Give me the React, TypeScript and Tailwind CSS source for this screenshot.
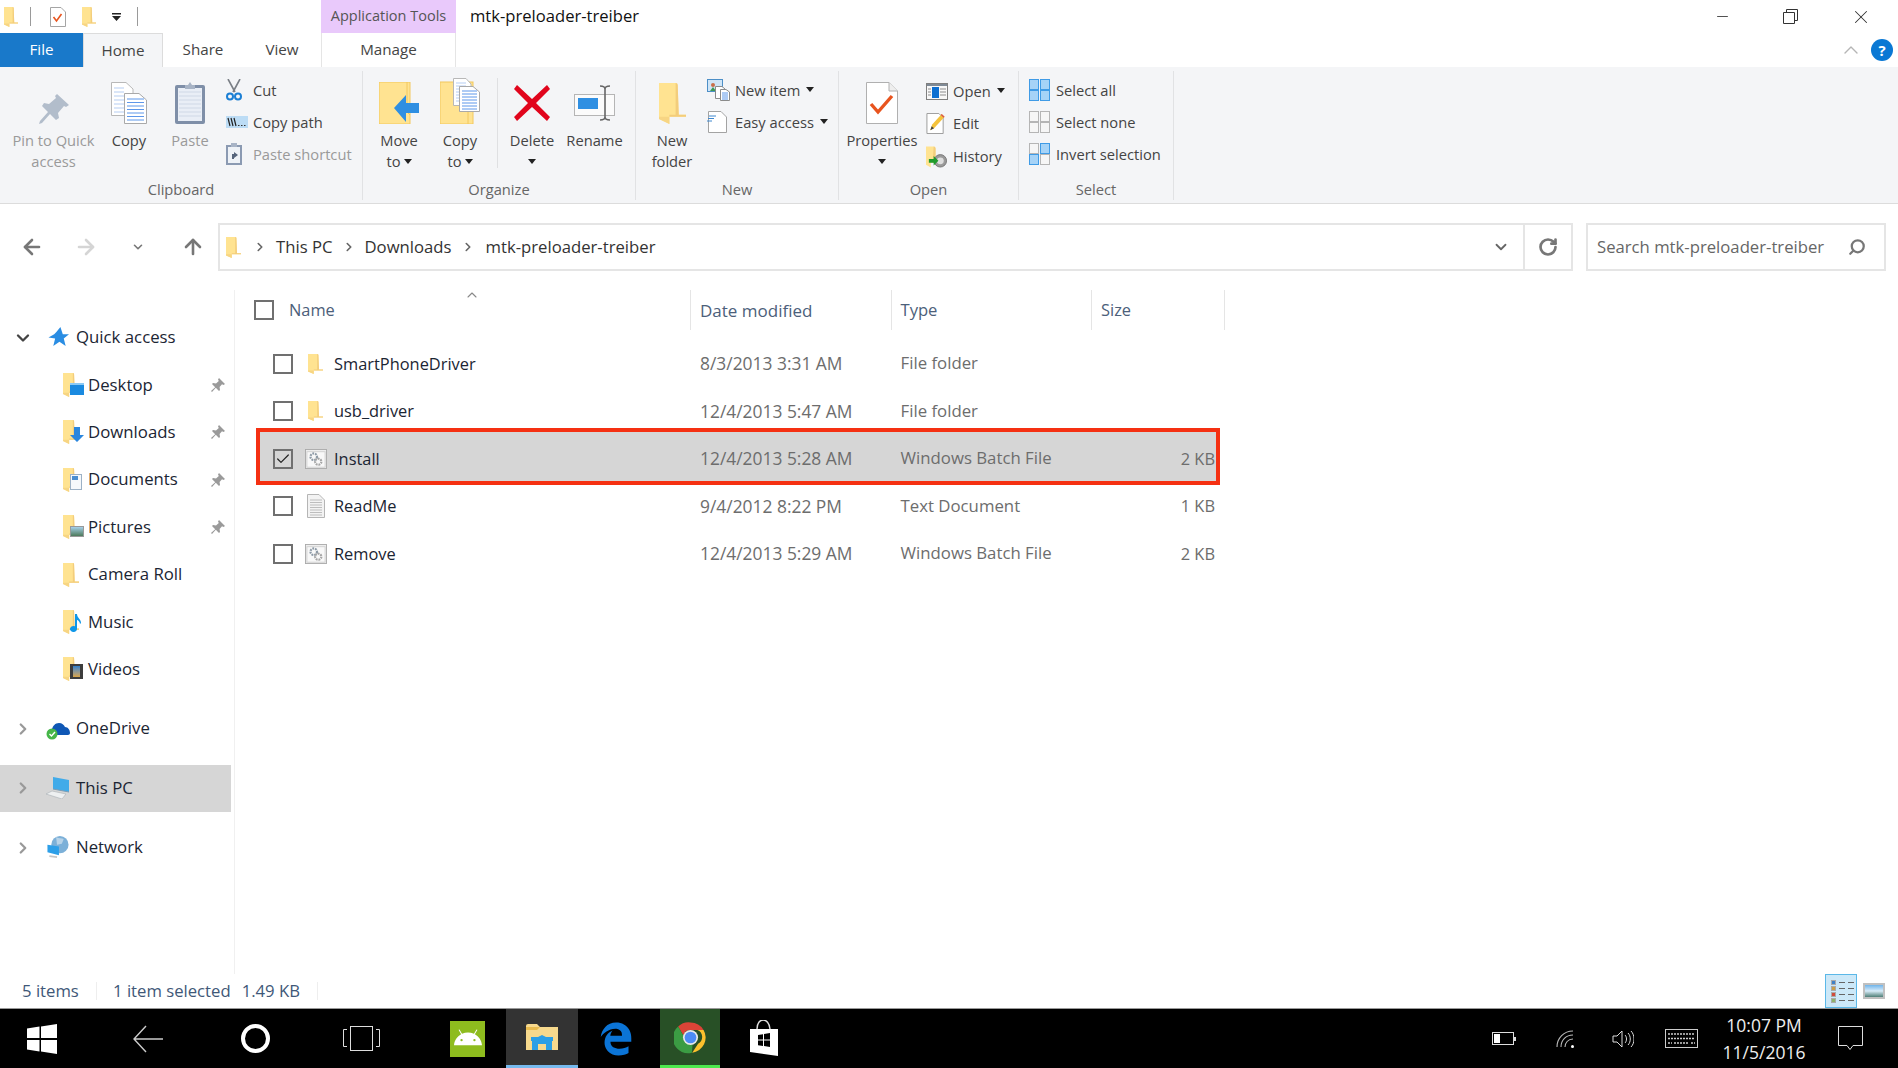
import React from 'react';
import { ArrowLeft, ArrowRight, ArrowUp, ChevronDown, ChevronRight, ChevronUp, RotateCw, Search, Check, Minus, X } from 'lucide-react';
import { FaAndroid } from 'react-icons/fa';
import { FaEdgeLegacy } from 'react-icons/fa6';

// small yellow explorer folder, stretched by width/height classes
const Folder = ({ className = 'w-[16px] h-[20px]' }: { className?: string }) => (
  <svg viewBox="0 0 26 40" className={className} preserveAspectRatio="none">
    <path d="M0 0H16Q18 0 18 2L19 31H26V33H10V40L0 35Z" fill="#ffe391" />
    <path d="M16 0Q18 0 18 2L19 31H26V33H10V31L16 31Z" fill="#f3cd7c" />
    <path d="M0 33L10 33V40L0 35Z" fill="#f7d583" />
  </svg>
);

const Pin = () => (
  <svg viewBox="0 0 16 16" className="w-[16px] h-[16px]">
    <path d="M9 1l6 6-1.5 1L12 7.2 9.6 10l.4 3-1 1-3.2-3.2L2 15l-1-1 4.2-3.8L2 7l1-1 3 .4L8.8 4 8 2.5z" fill="#9a9a9a" />
  </svg>
);

const DropArrow = () => (
  <svg viewBox="0 0 8 5" className="w-[8px] h-[5px] inline-block">
    <path d="M0 0h8L4 5z" fill="#222" />
  </svg>
);

const BatchIcon = () => (
  <svg viewBox="0 0 24 22" className="w-[22px] h-[20px] -ml-[3px]">
    <rect x="0.5" y="0.5" width="23" height="21" fill="#eeeeee" stroke="#a9a9a9" />
    <rect x="2" y="3" width="20" height="17" fill="#f8f8f8" stroke="#cfcfcf" />
    <circle cx="9.5" cy="8.5" r="3.6" fill="none" stroke="#8d9aa6" strokeWidth="2.4" strokeDasharray="2 1" />
    <circle cx="14.5" cy="14" r="3.4" fill="none" stroke="#a5a5a5" strokeWidth="2.4" strokeDasharray="2 1" />
  </svg>
);

const TextFileIcon = () => (
  <svg viewBox="0 0 18 24" className="w-[18px] h-[24px] -ml-[1px]">
    <path d="M.5.5H12L17.5 6V23.5H.5z" fill="#f3f3f3" stroke="#b5b5b5" />
    {[6, 8.5, 11, 13.5, 16, 18.5, 21].map((y) => (
      <path key={y} d={`M3 ${y}H15`} stroke="#bdbdbd" strokeWidth="1" />
    ))}
  </svg>
);

const CopyDocs = ({ className = 'w-[36px] h-[42px]' }: { className?: string }) => (
  <svg viewBox="0 0 36 42" className={className}>
    <path d="M.5.5H15L22 7V33.5H.5z" fill="#fff" stroke="#b8b8b8" />
    {[6, 10, 14, 18, 22, 26, 30].map((y) => (
      <path key={y} d={`M3 ${y}H13`} stroke="#b5cdf2" />
    ))}
    <path d="M13.5 11.5H28L35.5 18V41.5H13.5z" fill="#fff" stroke="#a9a9a9" />
    {[17, 20.5, 24, 27.5, 31, 34.5, 38].map((y) => (
      <path key={y} d={`M16 ${y}H33`} stroke="#5d97ea" />
    ))}
  </svg>
);

// -- icons that sit in the ribbon --
const PinBig = () => (
  <svg viewBox="0 0 30 30" className="w-[30px] h-[30px]">
    <path d="M18 0l12 11-3 2-2-1-6 7 1 5-3 2-6-6-8 9-3 1 1-3 8-9-6-6 2-3 5 1 7-6-1-2z" fill="#b2bdcb" />
  </svg>
);

const Clipboard = ({ className = 'w-[30px] h-[42px]' }: { className?: string }) => (
  <svg viewBox="0 0 30 42" className={className}>
    <rect x="0" y="3" width="30" height="39" rx="2" fill="#7f8fa8" />
    <rect x="3" y="6" width="24" height="33" fill="#e9eef6" />
    {[10, 14, 18, 22, 26, 30, 34].map((y) => (
      <path key={y} d={`M4 ${y}H26`} stroke="#cfd8e6" />
    ))}
    <path d="M10 7V3h3l2-3 2 3h3v4z" fill="#a8b4c6" />
  </svg>
);

const Scissors = () => (
  <svg viewBox="0 0 16 22" className="w-[16px] h-[22px]">
    <path d="M2 0l7 13M14 0L7 13" stroke="#7a7f86" strokeWidth="1.6" fill="none" />
    <circle cx="4" cy="17.5" r="3" fill="none" stroke="#1b7fd4" strokeWidth="2" />
    <circle cx="12" cy="17.5" r="3" fill="none" stroke="#1b7fd4" strokeWidth="2" />
  </svg>
);

const CopyPathIcon = () => (
  <svg viewBox="0 0 22 12" className="w-[22px] h-[12px]">
    <rect width="22" height="12" fill="#bcdcf5" />
    <path d="M2 2l2 8M5 2l2 8M8 2l2 8" stroke="#222" strokeWidth="1.2" />
    <path d="M12 9.5h1.5M15 9.5h1.5M18 9.5h1.5" stroke="#333" />
  </svg>
);

const PasteShortcutIcon = () => (
  <svg viewBox="0 0 16 22" className="w-[16px] h-[22px]">
    <rect y="2" width="16" height="20" fill="#8b9ab2" />
    <rect x="2" y="4" width="12" height="16" fill="#eef2f7" />
    <path d="M5 0h6v4H5z" fill="#a8b4c6" />
    <path d="M6 16V11h2V9l4 3-4 3v-2H8v3z" fill="#56657c" />
  </svg>
);

const MoveToIcon = () => (
  <svg viewBox="0 0 40 42" className="w-[40px] h-[42px]">
    <rect x="0" y="0" width="31" height="42" fill="#ffe391" stroke="#f2c85e" />
    <path d="M28 0V30L31 33" fill="none" stroke="#f2c85e" />
    <path d="M15 26L27 13V21H40V31H27V40Z" fill="#2f8fe2" />
  </svg>
);

const CopyToIcon = () => (
  <svg viewBox="0 0 40 46" className="w-[40px] h-[46px]">
    <rect x="0" y="4" width="33" height="42" fill="#ffe391" stroke="#f2c85e" />
    <path d="M28 4V46" stroke="#f2c85e" />
    <path d="M13.5.5H26L31 6V27.5H13.5z" fill="#fff" stroke="#b8b8b8" />
    {[5, 8, 11, 14, 17, 20, 23].map((y) => (
      <path key={y} d={`M16 ${y}H26`} stroke="#b5cdf2" />
    ))}
    <path d="M19.5 8.5H33L39.5 14V33.5H19.5z" fill="#fff" stroke="#a9a9a9" />
    {[13, 16, 19, 22, 25, 28, 31].map((y) => (
      <path key={y} d={`M22 ${y}H37`} stroke="#5d97ea" />
    ))}
  </svg>
);

const DeleteIcon = () => (
  <svg viewBox="0 0 36 36" className="w-[36px] h-[36px] mb-[3px]">
    <path d="M3 0L18 14 33 0l3 4-14 14 14 14-3 4L18 22 3 36l-3-4 14-14L0 4z" fill="#e1051c" />
  </svg>
);

const RenameIcon = () => (
  <svg viewBox="0 0 41 36" className="w-[41px] h-[36px] mb-[3px]">
    <rect x="0.5" y="9.5" width="40" height="21" fill="#fbfbfb" stroke="#b5b5b5" />
    <rect x="4" y="13" width="20" height="11" fill="#2f8fe2" />
    <path d="M26 1c3 0 5 1 5 3v28c0 2-2 3-5 3M36 1c-3 0-5 1-5 3v28c0 2 2 3 5 3" fill="none" stroke="#666" strokeWidth="1.6" />
  </svg>
);

const NewItemIcon = () => (
  <svg viewBox="0 0 23 22" className="w-[23px] h-[22px]">
    <rect x="0.5" y="0.5" width="15" height="12" fill="#cfe5f7" stroke="#4d8fc7" />
    <circle cx="6" cy="6" r="2" fill="#c96f4a" />
    <path d="M3 12l3-4 3 4z" fill="#3d9a57" />
    <path d="M8.5 7.5H15L18 10V19.5H8.5z" fill="#fff" stroke="#8b8b8b" />
    <path d="M13.5 10.5H19L22.5 13V21.5H13.5z" fill="#fff" stroke="#8b8b8b" />
    {[14, 16, 18, 20].map((y) => (
      <path key={y} d={`M15 ${y}H21`} stroke="#5d97ea" />
    ))}
  </svg>
);

const EasyAccessIcon = () => (
  <svg viewBox="0 0 20 22" className="w-[20px] h-[22px]">
    <path d="M1.5.5H14L19.5 6V21.5H1.5z" fill="#fff" stroke="#a3a3a3" />
    <path d="M2 5h7M1 7.5h6M0 10h5" stroke="#3f88cf" />
  </svg>
);

const PropertiesIcon = () => (
  <svg viewBox="0 0 32 42" className="w-[32px] h-[42px]">
    <path d="M.5.5H23L31.5 9V41.5H.5z" fill="#fff" stroke="#b0b0b0" />
    <path d="M23 .5V9h8.5" fill="#eee" stroke="#b0b0b0" />
    <path d="M5 22l7 8L26 14" fill="none" stroke="#e8541e" strokeWidth="3.4" />
  </svg>
);

const OpenIcon = () => (
  <svg viewBox="0 0 22 17" className="w-[22px] h-[17px]">
    <rect x="0.5" y="0.5" width="21" height="16" fill="#f8f8f8" stroke="#7f7f7f" />
    <rect x="1" y="1" width="20" height="2" fill="#7f8a96" />
    <rect x="6" y="4" width="7" height="11" fill="#0d6fd1" />
    <path d="M2 6h3M2 9h3M2 12h3M14 6h6M14 9h6M14 12h6" stroke="#8c8c8c" />
  </svg>
);

const EditIcon = () => (
  <svg viewBox="0 0 20 22" className="w-[20px] h-[21px]">
    <path d="M.5.5H13L17.5 5V21.5H.5z" fill="#fff" stroke="#9a9a9a" />
    <path d="M4 18l2-6L16 1l3 3L8 16z" fill="#f4c23b" />
    <path d="M4 18l1.4-4 2.6 2z" fill="#444" />
    <path d="M16 1l3 3-1 1-3-3z" fill="#d9534f" />
  </svg>
);

const HistoryIcon = () => (
  <svg viewBox="0 0 22 22" className="w-[21px] h-[22px]">
    <path d="M0 0H8Q10 0 10 2V15H15V17H5V22L0 19Z" fill="#ffe391" />
    <path d="M8 0Q10 0 10 2V15H15V17H7Z" fill="#f3cd7c" />
    <circle cx="15" cy="15" r="6.5" fill="#9a9a9a" stroke="#777" />
    <circle cx="15" cy="15" r="3.6" fill="#dedede" />
    <path d="M2 14h5v-3l5 5-5 5v-3H2z" transform="translate(1 -1)" fill="#1f9b2c" />
  </svg>
);

const FourSquares = ({ on }: { on: boolean[] }) => (
  <svg viewBox="0 0 21 22" className="w-[21px] h-[22px]">
    {[
      [0.5, 0.5],
      [11.5, 0.5],
      [0.5, 11.5],
      [11.5, 11.5],
    ].map(([x, y], i) => (
      <rect key={i} x={x} y={y} width="9" height="10" fill={on[i] ? '#a6d3f7' : '#f6f6f6'} stroke={on[i] ? '#3f9be6' : '#b5b5b5'} />
    ))}
  </svg>
);

// -- big and small ribbon buttons --
const LargeBtn = ({ width, icon, lines, arrow, gray }: { width: string; icon: React.ReactNode; lines: string[]; arrow?: 'inline' | 'below'; gray?: boolean }) => (
  <div className={`${width} flex flex-col items-center`}>
    <div className="h-[46px] mt-[7px] flex items-end justify-center">{icon}</div>
    <div className={`mt-[6px] text-center leading-[21px] ${gray ? 'text-[#9a9a9a]' : 'text-[#444]'}`}>
      <div>{lines[0]}</div>
      {lines[1] && (
        <div>
          {lines[1]}
          {arrow === 'inline' && <span className="ml-[3px] relative -top-[2px]"><DropArrow /></span>}
        </div>
      )}
      {arrow === 'below' && <div className="h-[21px] flex items-center justify-center"><DropArrow /></div>}
    </div>
  </div>
);

const SmallBtn = ({ icon, label, gray, arrow, iconW = 'w-[27px]', h = 'h-[32px]' }: { icon: React.ReactNode; label: string; gray?: boolean; arrow?: boolean; iconW?: string; h?: string }) => (
  <div className={`flex items-center ${h}`}>
    <div className={`${iconW} shrink-0`}>{icon}</div>
    <span className={gray ? 'text-[#9a9a9a]' : 'text-[#444]'}>{label}</span>
    {arrow && <span className="ml-[6px] relative -top-[2px]"><DropArrow /></span>}
  </div>
);

const Group = ({ width, label, children }: { width: string; label: string; children: React.ReactNode }) => (
  <div className={`${width} shrink-0 h-[129px] mt-[4px] border-r border-[#e1e2e4] flex flex-col justify-between`}>
    <div className="flex">{children}</div>
    <div className="h-[21px] leading-[21px] text-center text-[#666]">{label}</div>
  </div>
);

const Ribbon = () => (
  <div className="h-[137px] shrink-0 bg-[#f4f5f7] border-b border-[#dcdcdc] flex text-[14.7px]">
    <Group width="w-[363px]" label="Clipboard">
      <div className="pl-[8px]" />
      <LargeBtn width="w-[91px]" icon={<PinBig />} lines={['Pin to Quick', 'access']} gray />
      <LargeBtn width="w-[60px]" icon={<CopyDocs />} lines={['Copy']} />
      <LargeBtn width="w-[62px]" icon={<Clipboard />} lines={['Paste']} gray />
      <div className="ml-[5px] pt-[3px]">
        <SmallBtn icon={<Scissors />} label="Cut" />
        <SmallBtn icon={<CopyPathIcon />} label="Copy path" />
        <SmallBtn icon={<PasteShortcutIcon />} label="Paste shortcut" gray />
      </div>
    </Group>
    <Group width="w-[273px]" label="Organize">
      <div className="pl-[5px]" />
      <LargeBtn width="w-[62px]" icon={<MoveToIcon />} lines={['Move', 'to']} arrow="inline" />
      <LargeBtn width="w-[60px]" icon={<CopyToIcon />} lines={['Copy', 'to']} arrow="inline" />
      <div className="ml-[7px] w-px h-[90px] mt-[7px] bg-[#dfe0e2]" />
      <LargeBtn width="w-[68px]" icon={<DeleteIcon />} lines={['Delete']} arrow="below" />
      <LargeBtn width="w-[57px]" icon={<RenameIcon />} lines={['Rename']} />
    </Group>
    <Group width="w-[203px]" label="New">
      <div className="pl-[11px]" />
      <LargeBtn width="w-[50px]" icon={<Folder className="w-[27px] h-[41px]" />} lines={['New', 'folder']} />
      <div className="ml-[10px] pt-[3px]">
        <SmallBtn icon={<NewItemIcon />} label="New item" arrow iconW="w-[28px]" />
        <SmallBtn icon={<EasyAccessIcon />} label="Easy access" arrow iconW="w-[28px]" />
      </div>
    </Group>
    <Group width="w-[180px]" label="Open">
      <div className="pl-[7px]" />
      <LargeBtn width="w-[72px]" icon={<PropertiesIcon />} lines={['Properties']} arrow="below" />
      <div className="ml-[8px] pt-[4px]">
        <SmallBtn icon={<OpenIcon />} label="Open" arrow />
        <SmallBtn icon={<EditIcon />} label="Edit" h="h-[33px]" />
        <SmallBtn icon={<HistoryIcon />} label="History" h="h-[33px]" />
      </div>
    </Group>
    <Group width="w-[155px]" label="Select">
      <div className="pl-[10px] pt-[3px]">
        <SmallBtn icon={<FourSquares on={[true, true, true, true]} />} label="Select all" />
        <SmallBtn icon={<FourSquares on={[false, false, false, false]} />} label="Select none" />
        <SmallBtn icon={<FourSquares on={[false, true, true, false]} />} label="Invert selection" />
      </div>
    </Group>
  </div>
);

const TitleBar = () => (
  <div className="h-[33px] shrink-0 flex">
    <div className="w-[321px] flex items-center pl-[4px]">
      <Folder className="w-[14px] h-[20px]" />
      <div className="ml-[12px] w-px h-[19px] bg-[#9a9a9a]" />
      <svg viewBox="0 0 16 20" className="ml-[19px] w-[16px] h-[20px]">
        <path d="M.5.5H11L15.5 5V19.5H.5z" fill="#fff" stroke="#a5a5a5" />
        <path d="M3.5 10l3 4 5-7" fill="none" stroke="#e8541e" strokeWidth="1.6" />
      </svg>
      <Folder className="ml-[16px] w-[14px] h-[20px]" />
      <svg viewBox="0 0 9 8" className="ml-[16px] w-[9px] h-[8px]">
        <path d="M0 0h9v1.4H0zM0 3h9L4.5 8z" fill="#222" />
      </svg>
      <div className="ml-[16px] w-px h-[19px] bg-[#9a9a9a]" />
    </div>
    <div className="w-[135px] bg-[#e9c9fb] flex items-center justify-center text-[#555] text-[14.5px]">Application Tools</div>
    <div className="ml-[14px] flex items-center text-[16.6px] text-[#111]">mtk-preloader-treiber</div>
    <div className="ml-auto flex items-center pr-[26px] text-[#333]">
      <Minus size={17} strokeWidth={1.2} />
      <svg viewBox="0 0 15 15" className="ml-[52px] w-[15px] h-[15px]">
        <path d="M.5 3.5h11v11H.5zM3.5 3V.5h11v11H12" fill="none" stroke="#333" />
      </svg>
      <X size={22} strokeWidth={1.1} className="ml-[52px]" />
    </div>
  </div>
);

const Tabs = () => (
  <div className="h-[34px] shrink-0 flex items-stretch bg-white text-[#444] text-[15.2px] relative">
    <div className="w-[83px] bg-[#1979ca] text-white flex items-center justify-center">File</div>
    <div className="w-[80px] bg-[#f4f5f7] border-x border-t border-[#dcdcdc] flex items-center justify-center">Home</div>
    <div className="w-[80px] flex items-center justify-center">Share</div>
    <div className="w-[78px] flex items-center justify-center">View</div>
    <div className="w-[135px] border-x border-[#e5e5e5] flex items-center justify-center">Manage</div>
    <div className="ml-auto flex items-center pr-[5px]">
      <ChevronUp size={24} strokeWidth={1.4} className="text-[#b5b5b5]" />
      <div className="ml-[8px] w-[22px] h-[22px] rounded-full bg-[#0a78d4] text-white flex items-center justify-center text-[15px] font-bold leading-none">?</div>
    </div>
  </div>
);

const NavBar = () => (
  <div className="h-[86px] shrink-0 pt-[19px] flex items-start text-[16.7px]">
    <div className="w-[218px] h-[48px] flex items-center text-[#777]">
      <ArrowLeft size={24} strokeWidth={2.6} className="ml-[20px]" />
      <ArrowRight size={24} strokeWidth={2.6} className="ml-[30px] text-[#d5d5d5]" />
      <ChevronDown size={14} strokeWidth={2.8} className="ml-[33px]" />
      <ArrowUp size={24} strokeWidth={2.6} className="ml-[36px]" />
    </div>
    <div className="w-[1355px] h-[48px] border-2 border-[#e5e5e5] flex items-center text-[#333]">
      <Folder className="ml-[6px] w-[15px] h-[21px]" />
      <ChevronRight size={14} strokeWidth={2.8} className="ml-[12px] text-[#666]" />
      <span className="ml-[9px]">This PC</span>
      <ChevronRight size={14} strokeWidth={2.8} className="ml-[10px] text-[#666]" />
      <span className="ml-[8px]">Downloads</span>
      <ChevronRight size={14} strokeWidth={2.8} className="ml-[10px] text-[#666]" />
      <span className="ml-[10px]">mtk-preloader-treiber</span>
      <ChevronDown size={18} strokeWidth={2.4} className="ml-auto mr-[13px] text-[#666]" />
      <div className="w-[48px] h-full border-l-2 border-[#e5e5e5] flex items-center justify-center">
        <RotateCw size={20} strokeWidth={3.2} className="text-[#777]" />
      </div>
    </div>
    <div className="ml-[13px] w-[300px] h-[48px] border-2 border-[#e5e5e5] flex items-center pl-[9px] text-[#666]">
      <span>Search mtk-preloader-treiber</span>
      <Search size={18} strokeWidth={3} className="ml-auto mr-[18px] -scale-x-100 text-[#777]" />
    </div>
  </div>
);

// -- left navigation pane --
const qaIcon = (overlay: React.ReactNode) => (
  <div className="relative w-[20px] h-[24px]">
    <Folder className="w-[16px] h-[24px]" />
    <div className="absolute left-[7px] bottom-[2px]">{overlay}</div>
  </div>
);

const children = [
  { label: 'Desktop', pin: true, icon: qaIcon(<div className="w-[14px] h-[12px] bg-[#1a8ae0] border-t-2 border-[#8ccaf5]" />) },
  { label: 'Downloads', pin: true, icon: qaIcon(<ArrowDownBlue />) },
  { label: 'Documents', pin: true, icon: qaIcon(<div className="w-[12px] h-[16px] bg-[#f5f8fb] border border-[#9cb1c6]"><div className="h-[4px] w-[6px] m-[1px] bg-[#4a8ed0]" /></div>) },
  { label: 'Pictures', pin: true, icon: qaIcon(<div className="w-[14px] h-[11px] border border-[#999] bg-gradient-to-b from-[#a6d0ea] to-[#4e7a5c]" />) },
  { label: 'Camera Roll', pin: false, icon: <Folder className="w-[16px] h-[24px]" /> },
  { label: 'Music', pin: false, icon: qaIcon(<svg viewBox="0 0 12 18" className="w-[12px] h-[18px]"><path d="M5 0h2c0 4 4 5 4 9l-1 1c0-2-2-4-3-4v9a3.5 3 0 1 1-2-2.7z" fill="#0f97e8" /></svg>) },
  { label: 'Videos', pin: false, icon: qaIcon(<div className="w-[13px] h-[15px] bg-[#3d3d3d] flex items-center justify-center"><div className="w-[7px] h-[11px] bg-gradient-to-b from-[#2d7fc9] to-[#d9a441]" /></div>) },
];

function ArrowDownBlue() {
  return (
    <svg viewBox="0 0 14 15" className="w-[14px] h-[15px]">
      <path d="M4 0h6v8h4l-7 7-7-7h4z" fill="#2a86de" />
    </svg>
  );
}

const NavRow = ({ chevron, icon, label, selected, className = '' }: { chevron: React.ReactNode; icon: React.ReactNode; label: string; selected?: boolean; className?: string }) => (
  <div className={`h-[47.4px] flex items-center ${selected ? 'bg-[#d6d6d6]' : ''} ${className}`}>
    <div className="w-[48px] flex items-center justify-center pr-[2px]">{chevron}</div>
    <div className="w-[28px]">{icon}</div>
    <span className="text-[#1b2533]">{label}</span>
  </div>
);

const grayChevron = <ChevronRight size={18} strokeWidth={3} className="text-[#999]" />;

const Sidebar = () => (
  <div className="w-[235px] shrink-0 border-r border-[#f0f0f0] pt-[24px] pr-[3px] h-[684px] text-[16.8px]">
    <NavRow
      chevron={<ChevronDown size={20} strokeWidth={2.8} className="text-[#444]" />}
      icon={
        <svg viewBox="0 0 22 22" className="w-[21px] h-[21px]">
          <path d="M13 0l2.5 7.5H22l-5.5 4.5 2 8L12 15.500 5.500 20l2-8-7-1 6-3.500L9 5z" fill="#2a8de3" />
        </svg>
      }
      label="Quick access"
    />
    {children.map((c) => (
      <div key={c.label} className="h-[47.4px] flex items-center pl-[63px]">
        <div className="w-[25px]">{c.icon}</div>
        <span className="text-[#1b2533]">{c.label}</span>
        {c.pin && <span className="ml-auto mr-[5px]"><Pin /></span>}
      </div>
    ))}
    <NavRow
      className="mt-[12px]"
      chevron={grayChevron}
      icon={
        <svg viewBox="0 0 24 22" className="w-[24px] h-[22px] -ml-[2px]">
          <path d="M2 15c0-3 2-4 4-4 1-3 3-6 7-6 3 0 5 2 6 4 3 0 5 3 5 6 0 1-1 2-2 2H4z" fill="#0f57b5" />
          <circle cx="6" cy="16" r="5.5" fill="#46b648" />
          <path d="M3.5 16l2 2 3.5-4" fill="none" stroke="#fff" strokeWidth="1.4" />
        </svg>
      }
      label="OneDrive"
    />
    <NavRow
      className="mt-[12px]"
      selected
      chevron={grayChevron}
      icon={
        <svg viewBox="0 0 24 22" className="w-[24px] h-[22px] -ml-[2px]">
          <path d="M7 0l16 3v12L7 12z" fill="#41abe9" />
          <path d="M7 12l16 3" stroke="#7d9db5" />
          <path d="M0 17l6-3 14 3-4 5z" fill="#eef0f1" stroke="#aab0b5" strokeWidth=".6" />
        </svg>
      }
      label="This PC"
    />
    <NavRow
      className="mt-[12px]"
      chevron={grayChevron}
      icon={
        <svg viewBox="0 0 24 24" className="w-[24px] h-[23px] -ml-[2px]">
          <circle cx="14" cy="9" r="9" fill="#7cb0d8" />
          <path d="M10 1c3 2 6 1 8 2l-2 5-5 1z" fill="#b8d3e8" />
          <path d="M1 9l12 2v9l-12-3z" fill="#2d9fe8" />
          <path d="M3 21l8 1" stroke="#c5c5c5" strokeWidth="2" />
        </svg>
      }
      label="Network"
    />
  </div>
);

// -- file list --
const files = [
  { name: 'SmartPhoneDriver', date: '8/3/2013 3:31 AM', type: 'File folder', size: '', kind: 'folder' },
  { name: 'usb_driver', date: '12/4/2013 5:47 AM', type: 'File folder', size: '', kind: 'folder' },
  { name: 'Install', date: '12/4/2013 5:28 AM', type: 'Windows Batch File', size: '2 KB', kind: 'bat', selected: true },
  { name: 'ReadMe', date: '9/4/2012 8:22 PM', type: 'Text Document', size: '1 KB', kind: 'txt' },
  { name: 'Remove', date: '12/4/2013 5:29 AM', type: 'Windows Batch File', size: '2 KB', kind: 'bat' },
];

const Checkbox = ({ checked }: { checked?: boolean }) => (
  <div className="w-[20px] h-[20px] border-2 border-[#707070] flex items-center justify-center shrink-0">
    {checked && <Check size={18} strokeWidth={1.8} className="text-[#222]" />}
  </div>
);

const FileList = () => (
  <div className="flex-1">
    <div className="h-[40px] flex text-[#4c607a]">
      <div className="w-[455px] pl-[19px] flex items-center relative text-[16.4px]">
        <Checkbox />
        <span className="ml-[15px]">Name</span>
        <ChevronUp size={16} strokeWidth={1.6} className="absolute left-[229px] -top-[3px] text-[#888]" />
      </div>
      <div className="w-[200.5px] border-l border-[#e5e5e5] pl-[9px] flex items-center text-[17px]">Date modified</div>
      <div className="w-[200.5px] border-l border-[#e5e5e5] pl-[9px] flex items-center text-[16.6px]">Type</div>
      <div className="w-[134px] border-x border-[#e5e5e5] pl-[9px] flex items-center text-[16.4px]">Size</div>
    </div>
    <div className="pt-[10px]">
      {files.map((f) => (
        <div key={f.name} className="relative h-[47.5px] flex items-center w-[980px]">
          {f.selected && <div className="absolute left-[21px] -right-[5px] -top-[7px] -bottom-[2px] bg-[#d6d6d6] border-[4px] border-[#f53012]" />}
          <div className="relative w-[455px] pl-[38px] flex items-center text-[16.4px]">
            <Checkbox checked={f.selected} />
            <div className="w-[41px] pl-[15px] shrink-0 flex justify-start">
              {f.kind === 'folder' && <Folder className="w-[15px] h-[20px]" />}
              {f.kind === 'bat' && <BatchIcon />}
              {f.kind === 'txt' && <TextFileIcon />}
            </div>
            <span className="text-[#1b2533]">{f.name}</span>
          </div>
          <div className="relative w-[200.5px] pl-[10px] text-[#6d6d6d] text-[17.4px]">{f.date}</div>
          <div className="relative w-[200.5px] pl-[10px] text-[#6d6d6d] text-[16.8px]">{f.type}</div>
          <div className="relative w-[124px] text-right text-[#6d6d6d] text-[16.4px]">{f.size}</div>
        </div>
      ))}
    </div>
  </div>
);

const StatusBar = () => (
  <div className="h-[34px] shrink-0 flex items-center text-[#3f5878] pl-[22px] text-[16.7px]">
    <span className="w-[74px]">5 items</span>
    <div className="w-px h-[18px] bg-[#eeeeee]" />
    <span className="ml-[16px]">1 item selected</span>
    <span className="ml-[11px]">1.49 KB</span>
    <div className="ml-[17px] w-px h-[18px] bg-[#eeeeee]" />
    <div className="ml-auto mr-[6px] w-[32px] h-[34px] bg-[#cce8f8] border border-[#5bb8e8] flex flex-col justify-center gap-[1px] pl-[5px]">
      {['#3f82c7', '#c9a04a', '#d24a3a', '#8fb36a'].map((c) => (
        <div key={c} className="flex items-center gap-[3px]">
          <div className="w-[5px] h-[5px] border border-[#aaa]" style={{ backgroundColor: c }} />
          <div className="w-[6px] h-px bg-[#666]" />
          <div className="w-[6px] h-px bg-[#666]" />
        </div>
      ))}
    </div>
    <div className="mr-[13px] w-[22px] h-[16px] border-2 border-[#c0c0c0] bg-gradient-to-b from-[#6fb4ea] via-[#d8ecf8] to-[#4f7f78]" />
  </div>
);

// -- taskbar --
const Slot = ({ width, children, className = '' }: { width: string; children: React.ReactNode; className?: string }) => (
  <div className={`${width} h-full shrink-0 flex items-center justify-center ${className}`}>{children}</div>
);

const Taskbar = () => (
  <div className="h-[60px] shrink-0 bg-black border-t border-[#999] flex items-center">
    <Slot width="w-[84px]">
      <svg viewBox="0 0 30 30" className="w-[30px] h-[30px]">
        <path d="M0 4.500L12.500 2.600V14H0zM14 2.400L30 0V14H14zM0 16H12.500V27.400L0 25.500zM14 16H30V30L14 27.600z" fill="#fff" />
      </svg>
    </Slot>
    <Slot width="w-[128px]">
      <svg viewBox="0 0 30 28" className="w-[30px] h-[28px]">
        <path d="M30 14H1M13 1L1 14l12 13" fill="none" stroke="#ccc" strokeWidth="1.4" />
      </svg>
    </Slot>
    <Slot width="w-[87px]">
      <div className="w-[29px] h-[29px] rounded-full border-[4px] border-white" />
    </Slot>
    <Slot width="w-[124px]">
      <svg viewBox="0 0 37 25" className="w-[37px] h-[25px]">
        <rect x="7.5" y="0.5" width="22" height="24" fill="none" stroke="#ddd" />
        <path d="M4 3.500H.5v17H4M33 3.500h3.500v17H33" fill="none" stroke="#ddd" />
      </svg>
    </Slot>
    <Slot width="w-[83px]" className="pl-[6px]">
      <div className="w-[35px] h-[36px] bg-[#8ebc1e] flex items-center justify-center">
        <FaAndroid size={28} className="text-white" />
      </div>
    </Slot>
    <Slot width="w-[72px]" className="bg-[#333] border-b-[3px] border-[#76b9ed]">
      <svg viewBox="0 0 32 26" className="w-[32px] h-[26px]">
        <path d="M0 2Q0 0 2 0H11L14 3H32V26H0z" fill="#f7d98d" />
        <path d="M0 3H14L11 6H0z" fill="#e9bb4e" />
        <path d="M6 26V16L16 11 26 16V26H20V20H12V26z" fill="#2b9fe6" />
        <rect x="5" y="13" width="22" height="4" fill="#2b9fe6" />
      </svg>
    </Slot>
    <Slot width="w-[76px]">
      <FaEdgeLegacy size={34} className="text-[#0b74d6]" />
    </Slot>
    <Slot width="w-[60px]" className="ml-[6px] bg-[#285026] border-b-[3px] border-[#4de84d]">
      <svg viewBox="0 0 48 48" className="w-[33px] h-[33px]">
        <path d="M24 2a22 22 0 0 1 19 11H24a11 11 0 0 0-10.500 7.600L6 8A22 22 0 0 1 24 2z" fill="#db4437" />
        <path d="M43 13a22 22 0 0 1-16.500 33L35 33a11 11 0 0 0-1-20z" fill="#fbc02d" />
        <path d="M6 8l8 14a11 11 0 0 0 13 12L26 46A22 22 0 0 1 6 8z" fill="#3b9c43" />
        <circle cx="24" cy="24" r="11" fill="#e8e8e8" />
        <circle cx="24" cy="24" r="8.500" fill="#4c8bf5" />
      </svg>
    </Slot>
    <Slot width="w-[88px]">
      <svg viewBox="0 0 32 37" className="w-[32px] h-[37px]">
        <path d="M9 9c0-12 12-12 13 0" fill="none" stroke="#ddd" strokeWidth="1.4" />
        <path d="M2 9H30V36L2 32z" fill="#fff" />
        <path d="M10 15l5-.8v5.200H10zM16 14l6-1v6.400H16zM10 20.500h5V26l-5-.8zM16 20.500h6V27l-6-1z" fill="#000" />
      </svg>
    </Slot>
    <div className="ml-auto h-full flex items-center text-[#e8e8e8]">
      <Slot width="w-[58px]">
        <div className="flex items-center">
          <div className="w-[22px] h-[13px] border border-[#ddd] p-px"><div className="w-[6px] h-full bg-white" /></div>
          <div className="w-[2px] h-[4px] bg-[#ddd]" />
        </div>
      </Slot>
      <Slot width="w-[64px]">
        <svg viewBox="0 0 19 18" className="w-[19px] h-[18px]">
          <path d="M1 17C1 8 8 1 17 1M5 17c0-7 5-12 12-12M9 17c0-4 3-8 8-8" fill="none" stroke="#bbb" strokeWidth="1.1" />
          <circle cx="16.500" cy="16.500" r="1.500" fill="#fff" />
        </svg>
      </Slot>
      <Slot width="w-[52px]">
        <svg viewBox="0 0 22 18" className="w-[22px] h-[18px]">
          <path d="M1 6h4l5-5v16l-5-5H1z" fill="none" stroke="#ddd" />
          <path d="M13 5c2 2 2 6 0 8M16 3c3 3 3 9 0 12M19 1c4 4 4 12 0 16" fill="none" stroke="#ddd" />
        </svg>
      </Slot>
      <Slot width="w-[64px]">
        <svg viewBox="0 0 33 19" className="w-[33px] h-[19px]">
          <rect x="0.5" y="0.5" width="32" height="18" fill="none" stroke="#ccc" />
          <path d="M3 5h27M3 9.500h27M3 14h4M9 14h15M26 14h4" fill="none" stroke="#ccc" strokeWidth="1.400" strokeDasharray="2 1" />
        </svg>
      </Slot>
      <Slot width="w-[102px]">
        <div className="text-center text-[17.5px] leading-[27px] text-[#eee]">
          <div>10:07 PM</div>
          <div>11/5/2016</div>
        </div>
      </Slot>
      <Slot width="w-[70px]">
        <svg viewBox="0 0 25 25" className="w-[25px] h-[25px]">
          <path d="M.5.5h24v19H15l-3 4-3-4H.5z" fill="none" stroke="#ddd" />
        </svg>
      </Slot>
      <div className="w-[13px]" />
    </div>
  </div>
);

const App = () => (
  <div className="w-[1898px] h-[1068px] overflow-hidden bg-white flex flex-col text-[16px] leading-none" style={{ fontFamily: '"Open Sans", "Noto Sans", sans-serif' }}>
    <TitleBar />
    <Tabs />
    <Ribbon />
    <NavBar />
    <div className="flex-1 flex min-h-0">
      <Sidebar />
      <FileList />
    </div>
    <StatusBar />
    <Taskbar />
  </div>
);

export default App;
